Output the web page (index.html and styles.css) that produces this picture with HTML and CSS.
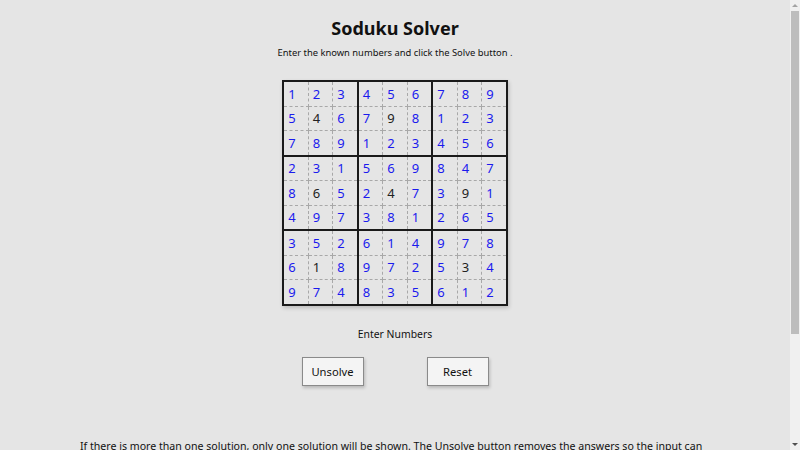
FILE: index.html
```html
<!DOCTYPE html>
<html>
<head>
<meta charset="utf-8">
<title>Soduku Solver</title>
<link rel="stylesheet" href="styles.css">
</head>
<body>
<div class="page">
  <h1 class="title">Soduku Solver</h1>
  <p class="intro">Enter the known numbers and click the Solve button .</p>
  <table class="board">
    <tr><td>1</td><td>2</td><td>3</td><td>4</td><td>5</td><td>6</td><td>7</td><td>8</td><td>9</td></tr>
    <tr><td>5</td><td class="given">4</td><td>6</td><td>7</td><td class="given">9</td><td>8</td><td>1</td><td>2</td><td>3</td></tr>
    <tr><td>7</td><td>8</td><td>9</td><td>1</td><td>2</td><td>3</td><td>4</td><td>5</td><td>6</td></tr>
    <tr><td>2</td><td>3</td><td>1</td><td>5</td><td>6</td><td>9</td><td>8</td><td>4</td><td>7</td></tr>
    <tr><td>8</td><td class="given">6</td><td>5</td><td>2</td><td class="given">4</td><td>7</td><td>3</td><td class="given">9</td><td>1</td></tr>
    <tr><td>4</td><td>9</td><td>7</td><td>3</td><td>8</td><td>1</td><td>2</td><td>6</td><td>5</td></tr>
    <tr><td>3</td><td>5</td><td>2</td><td>6</td><td>1</td><td>4</td><td>9</td><td>7</td><td>8</td></tr>
    <tr><td>6</td><td class="given">1</td><td>8</td><td>9</td><td>7</td><td>2</td><td>5</td><td class="given">3</td><td>4</td></tr>
    <tr><td>9</td><td>7</td><td>4</td><td>8</td><td>3</td><td>5</td><td>6</td><td>1</td><td>2</td></tr>
  </table>
  <p class="status">Enter Numbers</p>
  <div class="actions">
    <button class="btn">Unsolve</button>
    <button class="btn">Reset</button>
  </div>
  <p class="note">If there is more than one solution, only one solution will be shown. The Unsolve button removes the answers so the input can be changed and the puzzle solved again. The Reset button clears the whole board so a new puzzle can be entered.</p>
  <p class="note">Numbers shown in black are the ones that were entered. Numbers shown in blue were found by the solver.</p>
</div>
<div class="scrollbar" aria-hidden="true">
  <span class="arrow up"></span>
  <span class="thumb"></span>
  <span class="arrow down"></span>
</div>
</body>
</html>
```
FILE: styles.css
```css
html, body {
  margin: 0;
  padding: 0;
  background: #e5e5e5;
}
body {
  font-family: "Noto Sans", "Open Sans", sans-serif;
  color: #111;
  padding-right: 10px;
}
.page {
  display: flex;
  flex-direction: column;
  align-items: center;
  padding: 14px 0 60px;
}
.title {
  margin: 0;
  font-size: 18px;
  font-weight: 700;
  line-height: 28px;
}
.intro {
  margin: 4px 0 0;
  font-size: 9.4px;
  line-height: 14px;
}
.board {
  margin-top: 20px;
  border-collapse: collapse;
  border: 2px solid #1a1a1a;
  box-shadow: 1px 2px 4px rgba(0,0,0,0.18);
}
.board td {
  width: 19.5px;
  height: 23.5px;
  padding: 0 0 0 4px;
  border: 1px dashed #a8a8a8;
  font-size: 13px;
  color: #1a1aee;
  vertical-align: middle;
  text-align: left;
}
.board td.given {
  color: #222;
}
.board td:nth-child(3), .board td:nth-child(6) {
  border-right: 2px solid #1a1a1a;
}
.board tr:nth-child(3) td, .board tr:nth-child(6) td {
  border-bottom: 2px solid #1a1a1a;
}
.status {
  margin: 20px 0 0;
  font-size: 10.4px;
  line-height: 16px;
}
.actions {
  display: flex;
  gap: 63px;
  margin-top: 15px;
}
.btn {
  width: 62px;
  height: 29px;
  background: #f4f4f4;
  border: 1px solid #8a8a8a;
  font-family: inherit;
  font-size: 11.2px;
  color: #111;
  box-shadow: 1px 2px 3px rgba(0,0,0,0.2);
  padding: 0;
}
.note {
  align-self: stretch;
  margin: 52px 80px 0;
  font-size: 10.6px;
  line-height: 16px;
}
.note + .note {
  margin-top: 10px;
}
.scrollbar {
  position: fixed;
  top: 0;
  right: 0;
  width: 10px;
  height: 100%;
  background: #f0f0f0;
  display: flex;
  flex-direction: column;
  align-items: center;
}
.arrow {
  width: 0;
  height: 0;
  border-left: 3px solid transparent;
  border-right: 3px solid transparent;
  margin: 4px 0;
}
.arrow.up {
  border-bottom: 3px solid #a3a3a3;
}
.arrow.down {
  border-top: 3px solid #505050;
  margin-top: auto;
}
.thumb {
  width: 8px;
  height: 323px;
  background: #bdbdbd;
}
```
